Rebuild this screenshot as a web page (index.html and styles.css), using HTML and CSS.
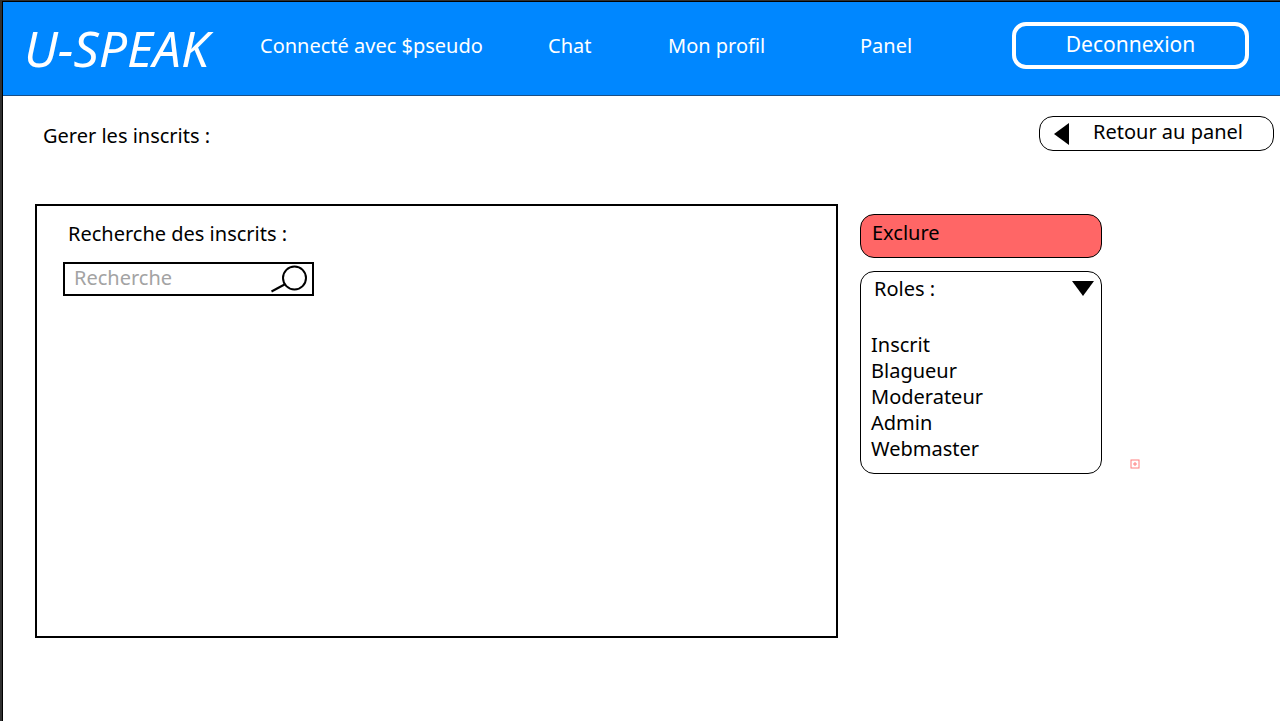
FILE: index.html
```html
<!DOCTYPE html>
<html lang="fr">
<head>
<meta charset="utf-8">
<meta name="viewport" content="width=device-width, initial-scale=1">
<title>U-SPEAK - Gerer les inscrits</title>
<link rel="stylesheet" href="styles.css">
</head>
<body>
<div class="page">
  <header class="topbar">
    <a class="logo" href="#">U-SPEAK</a>
    <nav class="nav">
      <span>Connecté avec $pseudo</span>
      <a href="#">Chat</a>
      <a href="#">Mon profil</a>
      <a href="#">Panel</a>
    </nav>
    <button class="logout" type="button">Deconnexion</button>
  </header>
  <div class="heading">
    <h1 class="title">Gerer les inscrits :</h1>
    <button class="back" type="button">
      <svg class="back-icon" viewBox="0 0 15 22" aria-hidden="true"><path d="M15 0V22L0 11Z"/></svg>
      <span>Retour au panel</span>
    </button>
  </div>
  <main class="content">
    <section class="members">
      <label class="members-label" for="search">Recherche des inscrits :</label>
      <div class="search">
        <input class="search-input" id="search" type="text" placeholder="Recherche">
        <button class="search-button" type="button" aria-label="Rechercher">
          <svg class="search-icon" viewBox="0 0 38 28" aria-hidden="true"><circle cx="24.5" cy="13" r="11.5"/><path d="M1.500 26.500L14.500 19.500"/></svg>
        </button>
      </div>
    </section>
    <aside class="actions">
      <button class="exclude" type="button">Exclure</button>
      <div class="roles-row">
        <details class="roles" open>
          <summary class="roles-head">
            <span>Roles :</span>
            <svg class="roles-icon" viewBox="0 0 22 15" aria-hidden="true"><path d="M0 0H22L11 15Z"/></svg>
          </summary>
          <div class="roles-list">
            <button class="role" type="button">Inscrit</button>
            <button class="role" type="button">Blagueur</button>
            <button class="role" type="button">Moderateur</button>
            <button class="role" type="button">Admin</button>
            <button class="role" type="button">Webmaster</button>
          </div>
        </details>
        <svg class="marker" viewBox="0 0 10 10" aria-hidden="true"><rect x="1" y="1" width="8" height="8"/><path d="M5 3V7M3 5H7"/></svg>
      </div>
    </aside>
  </main>
</div>
</body>
</html>
```
FILE: styles.css
```css
* {
  box-sizing: border-box;
}

body {
  margin: 0;
  background: #fff;
  color: #000;
  font: 20px/26px "Noto Sans", sans-serif;
}

button,
input {
  margin: 0;
  padding: 0;
  border: 0;
  background: none;
  color: inherit;
  font: inherit;
}

a {
  color: inherit;
  text-decoration: none;
}

.page {
  min-height: 100vh;
  border-top: 1px solid #303030;
  border-left: 2px solid #303030;
  box-shadow: inset 1px 1px #000;
  padding: 1px 0 0 1px;
}

.topbar {
  display: grid;
  grid-template-columns: 236px 1fr 237px;
  align-items: center;
  height: 94px;
  padding: 0 31px 6px 21px;
  border-bottom: 1px solid #1a4f86;
  background: #0087ff;
  color: #fff;
}

.logo {
  padding-top: 5px;
  font-size: 50px;
  font-style: italic;
  line-height: 60px;
}

.nav {
  display: grid;
  grid-template-columns: 288fr 120fr 192fr 152fr;
  white-space: nowrap;
}

.logout {
  height: 47px;
  border: 4px solid #fff;
  border-radius: 14px;
  padding-bottom: 3px;
  font-size: 21px;
}

.heading {
  display: flex;
  justify-content: space-between;
  padding: 20px 6px 0 40px;
}

.title {
  margin: 7px 0 0;
  font-size: 20px;
  font-weight: 400;
}

.back {
  display: flex;
  align-items: center;
  gap: 24px;
  width: 235px;
  height: 35px;
  padding: 0 14px;
  border: 1px solid #000;
  border-radius: 14px;
}

.back-icon {
  width: 15px;
  height: 22px;
}

.back span {
  padding-bottom: 3px;
}

.content {
  display: grid;
  grid-template-columns: 1fr 420px;
  gap: 22px;
  padding: 53px 0 0 32px;
}

.members {
  min-height: 434px;
  padding: 15px 26px;
  border: 2px solid #000;
}

.members-label {
  display: block;
  padding-left: 5px;
}

.search {
  display: flex;
  width: 251px;
  height: 34px;
  margin-top: 15px;
  border: 2px solid #000;
}

.search-input {
  flex: 1;
  min-width: 0;
  padding: 0 0 2px 9px;
}

.search-input::placeholder {
  color: #a3a3a3;
  opacity: 1;
}

.search-button {
  display: flex;
  align-items: center;
  padding-right: 4px;
}

.search-icon {
  width: 38px;
  height: 28px;
  fill: none;
  stroke: #000;
  stroke-width: 2;
}

.actions {
  padding-top: 10px;
}

.exclude {
  display: block;
  width: 242px;
  height: 44px;
  padding: 0 11px 7px;
  border: 1px solid #000;
  border-radius: 14px;
  background: #ff6666;
  text-align: left;
}

.roles-row {
  display: flex;
  align-items: flex-end;
  gap: 28px;
  margin-top: 13px;
}

.roles {
  width: 242px;
  padding: 4px 7px 11px 10px;
  border: 1px solid #000;
  border-radius: 14px;
}

.roles-head {
  display: flex;
  justify-content: space-between;
  padding-left: 3px;
  list-style: none;
}

.roles-icon {
  width: 22px;
  height: 15px;
  margin-top: 5px;
}

.roles-list {
  display: flex;
  flex-direction: column;
  align-items: flex-start;
  padding-top: 30px;
}

.marker {
  width: 10px;
  height: 10px;
  margin-bottom: 5px;
  fill: none;
  stroke: #ff8080;
  stroke-width: 1;
}
```
